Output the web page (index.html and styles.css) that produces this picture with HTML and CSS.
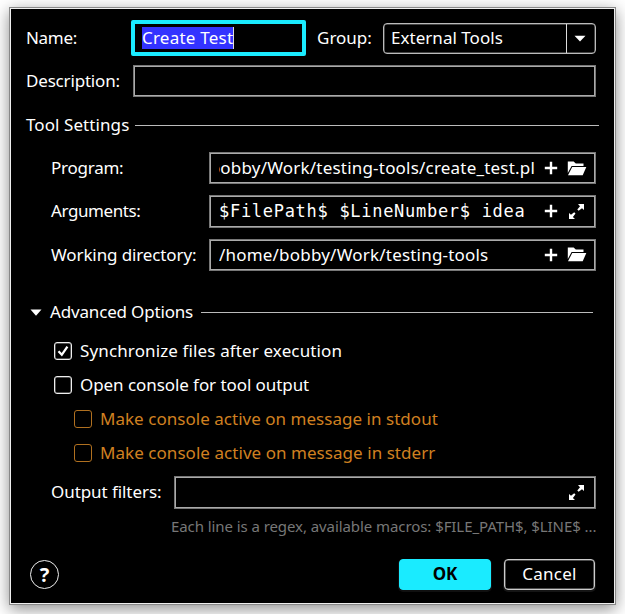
FILE: index.html
```html
<!DOCTYPE html>
<html lang="en">
<head>
<meta charset="utf-8">
<title>Create Test</title>
<link rel="stylesheet" href="styles.css">
</head>
<body>
<svg class="defs" width="0" height="0">
  <symbol id="plus" viewBox="0 0 14 14"><path d="M7 .8v12.4M.8 7h12.4" stroke="#fff" stroke-width="2.400"/></symbol>
  <symbol id="folder" viewBox="0 0 20 15"><path d="M.8.6H6.600L8.800 2.600H16.500V5H4.600L.8 12Z" fill="#fff"/><path d="M5.200 6H19.300L15.700 14.200H1Z" fill="#fff"/></symbol>
  <symbol id="expand" viewBox="0 0 17 17"><path d="M10 1H16V7L14 5.200L10.600 7.800L9.300 6.500L12 3.200ZM1 10L3 11.800L6.200 9.300L7.500 10.600L4.900 13.900L7 16H1Z" fill="#fff"/></symbol>
</svg>
<main class="dialog">
  <div class="row name-row">
    <label class="name-label t-name">Name:</label>
    <div class="name-field"><span class="selection t-create">Create Test</span></div>
    <label class="group-label t-group">Group:</label>
    <div class="select"><span class="t-external">External Tools</span><i class="select-button"><svg width="12" height="7" viewBox="0 0 12 7"><path d="M.5.7H11.500L6 6.500Z" fill="#fff"/></svg></i></div>
  </div>
  <div class="row description-row">
    <label class="description-label t-description">Description:</label>
    <div class="field"></div>
  </div>
  <div class="row tool-title"><span class="t-tool">Tool Settings</span><i class="rule"></i></div>
  <div class="row setting program-row">
    <label class="t-program">Program:</label>
    <div class="field"><div class="value scrolled"><span class="t-path">/home/bobby/Work/testing-tools/create_test.pl</span></div><svg class="plus"><use href="#plus"/></svg><svg class="folder"><use href="#folder"/></svg></div>
  </div>
  <div class="row setting arguments-row">
    <label class="t-arguments">Arguments:</label>
    <div class="field"><div class="value mono">$FilePath$ $LineNumber$ idea</div><svg class="plus"><use href="#plus"/></svg><svg class="expand"><use href="#expand"/></svg></div>
  </div>
  <div class="row setting directory-row">
    <label class="t-directory">Working directory:</label>
    <div class="field"><div class="value"><span class="t-home">/home/bobby/Work/testing-tools</span></div><svg class="plus"><use href="#plus"/></svg><svg class="folder"><use href="#folder"/></svg></div>
  </div>
  <div class="row advanced-title"><svg width="12" height="7" viewBox="0 0 12 7"><path d="M.5.5H11.500L6 6.700Z" fill="#fff"/></svg><span class="t-advanced">Advanced Options</span><i class="rule"></i></div>
  <div class="row check"><i class="box"><svg width="18" height="18" viewBox="0 0 18 18"><path d="M4.500 9.300L7.800 12.800L13.400 4.700" fill="none" stroke="#fff" stroke-width="2.300"/></svg></i><span class="t-sync">Synchronize files after execution</span></div>
  <div class="row check"><i class="box"></i><span class="t-open">Open console for tool output</span></div>
  <div class="row check disabled"><i class="box"></i><span class="t-stdout">Make console active on message in stdout</span></div>
  <div class="row check disabled"><i class="box"></i><span class="t-stderr">Make console active on message in stderr</span></div>
  <div class="row filters-row"><label class="t-filters">Output filters:</label><div class="field"><svg class="expand"><use href="#expand"/></svg></div></div>
  <div class="hint"><span class="t-hint">Each line is a regex, available macros: $FILE_PATH$, $LINE$ ...</span></div>
  <footer class="row actions">
    <span class="help">?</span>
    <span class="button primary t-ok">OK</span>
    <span class="button t-cancel">Cancel</span>
  </footer>
</main>
</body>
</html>
```
FILE: styles.css
```css
* { box-sizing: border-box; }
body { margin: 0; padding: 8px 0 0 10px; width: 625px; height: 614px; overflow: hidden; background: #fff; font: 17px/24px "Noto Sans", sans-serif; color: #fff; }
.defs { position: absolute; }
.dialog { width: 605px; height: 596px; padding: 11px 15px 0; background: #000; border: 1px solid #eee; box-shadow: 0 0 0 1px #888, 0 4px 15px 1px rgba(0,0,0,.45); white-space: nowrap; }
.row { display: flex; align-items: center; }
.row > * { flex: none; }
.name-row { height: 36px; }
.name-label { width: 105px; }
.name-field { display: flex; align-items: center; width: 175px; height: 36px; padding-left: 7px; border: 4px solid #1aebff; border-radius: 2px; }
.selection { height: 22px; line-height: 21px; background: #3333ff; border-right: 1px solid #ddd; }
.group-label { width: 77px; padding-left: 11px; }
.select { display: flex; align-items: center; width: 213px; height: 31px; padding-left: 7px; border: 1px solid #bbb; border-radius: 4px; box-shadow: inset 0 0 0 .5px #888; }
.select span { flex: 1; }
.select-button { width: 29px; height: 29px; border-left: 1px solid #ddd; display: flex; align-items: center; justify-content: center; padding-right: 2px; }
.field { display: flex; align-items: center; height: 32px; border: 1px solid #777; box-shadow: inset 0 0 0 1px #aaa; padding: 0 8px 0 9px; }
.field svg { flex: none; }
.description-row { height: 32px; margin-top: 9px; }
.description-label { width: 107px; }
.description-row .field { width: 463px; }
.tool-title { height: 24px; margin-top: 16px; }
.rule { height: 1px; background: #bbb; }
.tool-title span { width: 109px; }
.tool-title .rule { width: 464px; }
.setting { padding-left: 25px; }
.setting label { width: 158px; }
.setting .field { width: 387px; }
.program-row { margin-top: 15px; height: 32px; }
.arguments-row { margin-top: 11px; height: 33px; }
.arguments-row label { padding-bottom: 1px; }
.arguments-row .field { height: 33px; padding-bottom: 1px; }
.directory-row { margin-top: 10px; height: 33px; }
.value { width: 316px; margin-right: 9px; overflow: hidden; }
.scrolled { display: flex; justify-content: flex-end; }
.mono { font-family: "DejaVu Sans Mono", monospace; font-size: 17px; letter-spacing: .71px; }
.plus { width: 14px; height: 14px; margin-right: 9px; }
.folder { width: 20px; height: 15px; }
.expand { width: 17px; height: 17px; margin-left: 1px; }
.advanced-title { height: 24px; margin-top: 29px; padding-left: 4px; }
.advanced-title span { width: 151px; margin-left: 8px; }
.advanced-title .rule { width: 392px; }
.check { height: 34px; padding-left: 28px; }
.advanced-title + .check { margin-top: 10px; }
.check.disabled { padding-left: 48px; color: #d08020; }
.box { width: 18px; height: 18px; margin-right: 8px; border: 1px solid #eee; border-radius: 3px; box-shadow: inset 0 0 0 .5px #999; }
.box svg { display: block; margin: -1px; }
.disabled .box { border-color: #b07020; box-shadow: none; }
.filters-row { height: 33px; margin-top: 6px; padding-left: 25px; }
.filters-row label { width: 123px; padding-bottom: 2px; }
.filters-row .field { width: 422px; height: 33px; justify-content: flex-end; padding-right: 10px; }
.hint { height: 24px; margin-top: 5px; padding-left: 145px; color: #777; font-size: 15px; line-height: 24px; }
.actions { height: 32px; margin-top: 20px; padding-left: 4px; }
.help { width: 29px; height: 29px; border: 1px solid #eee; border-radius: 50%; font-size: 20px; line-height: 27px; text-align: center; font-weight: 700; margin-right: 340px; }
.button { width: 91px; height: 31px; line-height: 27px; text-align: center; border: 1px solid #ccc; border-radius: 4px; box-shadow: inset 0 0 0 .5px #999, 0 1px 0 1px #151515; }
.primary { width: 92px; margin-right: 13px; color: #000; font-weight: 700; background: #1aebff; border-color: #1aebff; box-shadow: 0 1px 0 1px #101010; }
.t-name { letter-spacing: -.3px; }
.t-create { letter-spacing: .22px; }
.t-description { letter-spacing: -.18px; }
.t-tool { letter-spacing: .08px; }
.t-program { letter-spacing: -.25px; }
.t-arguments { letter-spacing: -.4px; }
.t-directory { letter-spacing: -.12px; }
.t-home, .t-path { letter-spacing: .2px; }
.t-advanced { letter-spacing: -.17px; }
.t-sync { letter-spacing: .13px; }
.t-open { letter-spacing: -.07px; }
.t-external, .t-stdout { letter-spacing: .03px; }
.t-stderr { letter-spacing: .05px; }
.t-filters { letter-spacing: -.07px; }
.t-hint { letter-spacing: -.075px; }
.t-cancel { letter-spacing: .25px; }
```
